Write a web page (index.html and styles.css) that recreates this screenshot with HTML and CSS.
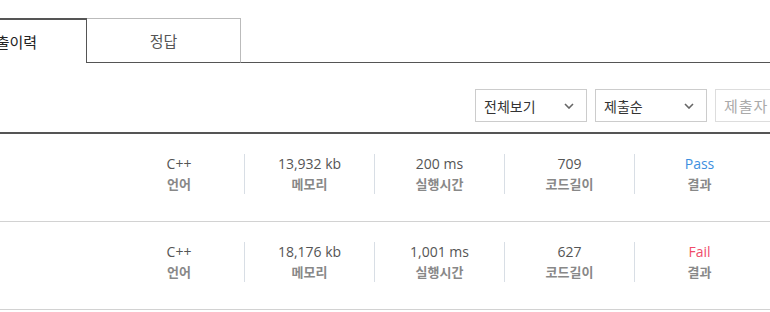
FILE: index.html
```html
<!DOCTYPE html>
<html lang="ko">
<head>
  <meta charset="UTF-8">
  <meta name="viewport" content="width=device-width, initial-scale=1.0">
  <title>제출이력</title>
  <link rel="stylesheet" href="styles.css">
</head>
<body>
  <div class="page">
    <div class="tabs">
      <div class="tab active">제출이력</div>
      <div class="tab">정답</div>
      <div class="tab-rest"></div>
    </div>

    <div class="filters">
      <div class="select">
        <span>전체보기</span>
        <svg class="chevron" width="10" height="6" viewBox="0 0 10 6"><path d="M1 1l4 4 4-4" fill="none" stroke="#666" stroke-width="1.6"/></svg>
      </div>
      <div class="select">
        <span>제출순</span>
        <svg class="chevron" width="10" height="6" viewBox="0 0 10 6"><path d="M1 1l4 4 4-4" fill="none" stroke="#666" stroke-width="1.6"/></svg>
      </div>
      <input class="search" type="text" placeholder="제출자">
    </div>

    <div class="list">
      <div class="row">
        <div class="row-info"></div>
        <div class="stats">
          <div class="stat"><div class="value">C++</div><div class="label">언어</div></div>
          <div class="stat"><div class="value">13,932 kb</div><div class="label">메모리</div></div>
          <div class="stat"><div class="value">200 ms</div><div class="label">실행시간</div></div>
          <div class="stat"><div class="value">709</div><div class="label">코드길이</div></div>
          <div class="stat"><div class="value pass">Pass</div><div class="label">결과</div></div>
        </div>
      </div>
      <div class="row">
        <div class="row-info"></div>
        <div class="stats">
          <div class="stat"><div class="value">C++</div><div class="label">언어</div></div>
          <div class="stat"><div class="value">18,176 kb</div><div class="label">메모리</div></div>
          <div class="stat"><div class="value">1,001 ms</div><div class="label">실행시간</div></div>
          <div class="stat"><div class="value">627</div><div class="label">코드길이</div></div>
          <div class="stat"><div class="value fail">Fail</div><div class="label">결과</div></div>
        </div>
      </div>
    </div>
  </div>
</body>
</html>
```

FILE: styles.css
```css
* {
  margin: 0;
  padding: 0;
  box-sizing: border-box;
}
body {
  font-family: "Open Sans", "Noto Sans CJK KR", sans-serif;
  background: #fff;
  color: #555;
  overflow: hidden;
}
.page {
  width: 1000px;
  margin-left: -67px;
  padding-top: 18px;
}
.tabs {
  display: flex;
  height: 45px;
}
.tab {
  width: 154px;
  display: flex;
  align-items: center;
  justify-content: center;
  font-family: "Noto Sans CJK KR", sans-serif;
  font-size: 15px;
  color: #555;
  border-top: 1px solid #bbb;
  border-right: 1px solid #bbb;
  border-bottom: 1px solid #555;
}
.tab.active {
  color: #222;
  border-top: 2px solid #555;
  border-right: 1px solid #555;
  border-bottom: none;
}
.tab-rest {
  flex: 1;
  border-bottom: 1px solid #555;
}
.filters {
  display: flex;
  gap: 8px;
  padding-left: 542px;
  margin-top: 26px;
  height: 33px;
}
.select {
  width: 112px;
  height: 33px;
  border: 1px solid #ccc;
  display: flex;
  align-items: center;
  justify-content: space-between;
  padding: 0 12px 0 8px;
  font-family: "Noto Sans CJK KR", sans-serif;
  font-size: 14px;
  color: #333;
}
.search {
  width: 150px;
  height: 33px;
  border: 1px solid #ddd;
  padding: 0 8px;
  font-family: "Noto Sans CJK KR", sans-serif;
  font-size: 15px;
  letter-spacing: 1px;
  color: #333;
  outline: none;
}
.search::placeholder {
  color: #aaa;
}
.list {
  margin-top: 10px;
  border-top: 2px solid #555;
}
.row {
  display: flex;
  padding: 20px 0 27px;
  border-bottom: 1px solid #d2d2d2;
}
.row-info {
  width: 181px;
}
.stats {
  display: flex;
}
.stat {
  width: 130px;
  height: 40px;
  text-align: center;
  border-left: 1px solid #d8dee5;
}
.stat:first-child {
  border-left: none;
}
.value {
  font-size: 14px;
  line-height: 20px;
  color: #555;
}
.value.pass {
  color: #3d8fe0;
}
.value.fail {
  color: #f04c6a;
}
.label {
  font-family: "Noto Sans CJK KR", sans-serif;
  font-size: 13px;
  font-weight: 700;
  line-height: 20px;
  color: #888;
}
```
